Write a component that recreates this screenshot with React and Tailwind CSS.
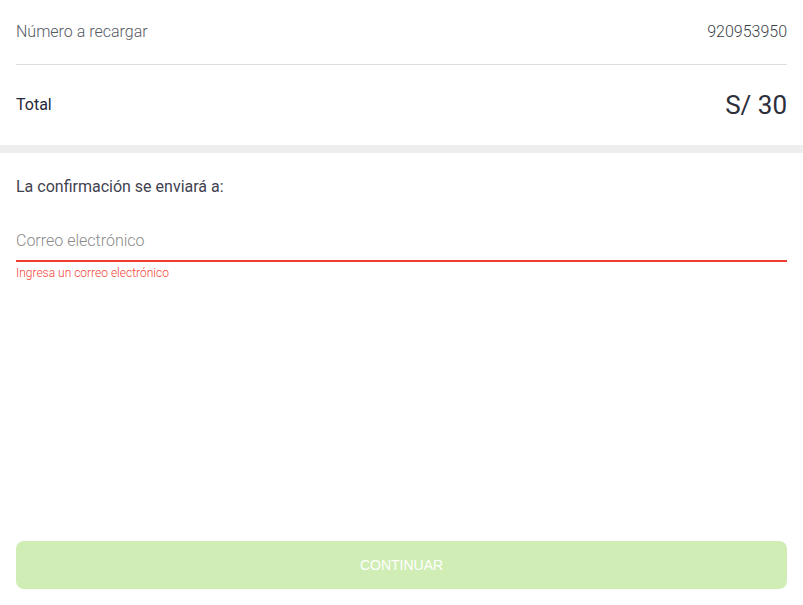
export default function App() {
  return (
    <div className="w-[803px] h-[605px] bg-white flex flex-col" style={{ fontFamily: "Roboto, sans-serif" }}>
      <div className="px-4">
        <div className="h-[65px] flex items-center justify-between border-b border-[#dedede]">
          <span className="text-[16px] font-light text-[#555a63]">Número a recargar</span>
          <span className="text-[16px] font-light text-[#3c3f48]">920953950</span>
        </div>
        <div className="h-[80px] flex items-center justify-between">
          <span className="text-[16px] font-normal text-[#25273a]">Total</span>
          <span className="text-[26px] text-[#2c2e3b]">S/ 30</span>
        </div>
      </div>
      <div className="h-[8px] bg-[#eeeeee]" />
      <div className="px-4 flex flex-col flex-1">
        <div className="pt-[22px] text-[16px] text-[#3f4250] leading-[24px]">La confirmación se enviará a:</div>
        <div className="mt-[30px] h-[33px] border-b-2 border-[#f03c2e] flex items-start">
          <span className="text-[16px] font-light text-[#8a8a8a] leading-[24px]">Correo electrónico</span>
        </div>
        <div className="mt-[4px] text-[12px] font-light text-[#f44336] leading-[14px]">Ingresa un correo electrónico</div>
        <div className="flex-1" />
        <div
          className="mb-[16px] h-[48px] rounded-[8px] bg-[#cfedb4] flex items-center justify-center text-white text-[14px]"
          style={{ fontFamily: '"Liberation Sans", Arial, sans-serif' }}
        >
          CONTINUAR
        </div>
      </div>
    </div>
  );
}
